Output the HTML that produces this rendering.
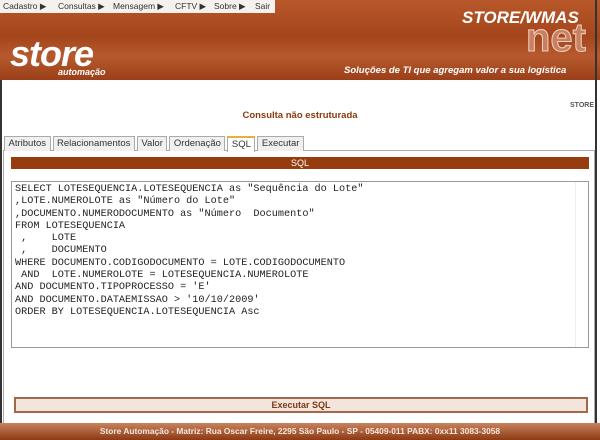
<!DOCTYPE html>
<html><head><meta charset="utf-8"><style>
*{margin:0;padding:0;box-sizing:border-box}
body{width:600px;height:440px;overflow:hidden;background:#fff;font-family:"Liberation Sans",sans-serif;position:relative}
.hdr{position:absolute;left:0;top:0;width:600px;height:80px;background:linear-gradient(180deg,#b8582a 0%,#a4451c 45%,#b65a2e 70%,#9a3f18 100%)}
.menu{position:absolute;left:0;top:0;width:275px;height:13px;background:#f4f1ee;font-size:8.5px;color:#333;line-height:13px;white-space:nowrap}
.menu span{position:absolute;top:0}
.logo{position:absolute;left:10px;top:33px;font:italic bold 36px "Liberation Sans",sans-serif;color:#fff;letter-spacing:-1px}
.auto{position:absolute;left:58px;top:67px;font:italic bold 9px "Liberation Sans",sans-serif;color:#fff}
.wmas{position:absolute;left:462px;top:8px;font:italic bold 17px "Liberation Sans",sans-serif;color:#fff}
.net{position:absolute;left:526px;top:16px;font:bold 40px "Liberation Sans",sans-serif;color:#c98060;-webkit-text-stroke:1px #f0d0c0}
.slog{position:absolute;left:344px;top:65px;font:italic bold 9.5px "Liberation Sans",sans-serif;color:#fff}
.lb{position:absolute;left:0;top:80px;width:2px;height:343px;background:#333}
.rb{position:absolute;right:3px;top:0;width:2px;height:423px;background:#333}
.store{position:absolute;right:6px;top:102px;font-size:7px;font-weight:bold;color:#555}
.title{position:absolute;left:0;width:600px;top:110px;text-align:center;font-size:9.5px;font-weight:bold;color:#8a3b10}
.tabs{position:absolute;left:4px;top:136px;height:15px;display:flex;font-size:9.5px;color:#333}
.tabs div{border:1px solid #aaa;border-bottom:none;background:#f0f0f0;padding:1px 3.5px;margin-right:2px;height:15px}
.tabs .act{background:#fff;border-top:2px solid #e8b040;height:16px}
.panel{position:absolute;left:3px;top:150px;width:592px;height:280px;border:1px solid #aaa}
.sqlbar{position:absolute;left:11px;top:157px;width:578px;height:12px;background:#963c0f;color:#fff;font-size:9px;text-align:center;line-height:12px}
.ta{position:absolute;left:11px;top:181px;width:578px;height:167px;border:1px solid #999;background:#fff}
.ta pre{position:absolute;left:3px;top:2px;font:10.2px/12.3px "Liberation Mono",monospace;color:#222}
.sb{position:absolute;right:0;top:0;width:13px;height:165px;border-left:1px solid #eee}
.btn{position:absolute;left:14px;top:397px;width:574px;height:16px;border:2px solid #a0694c;background:#f3e5dc;text-align:center;font-size:9px;font-weight:bold;color:#7a3a18;line-height:12px}
.foot{position:absolute;left:0;top:423px;width:600px;height:17px;background:linear-gradient(180deg,#c7835e,#8c3a14);color:#f5e6dc;font-size:8.4px;font-weight:bold;text-align:center;line-height:17px}
</style></head><body>
<div class="hdr">
<div class="menu"><span style="left:3px">Cadastro ▶</span><span style="left:58px">Consultas ▶</span><span style="left:113px">Mensagem ▶</span><span style="left:175px">CFTV ▶</span><span style="left:214px">Sobre ▶</span><span style="left:255px">Sair</span></div>
<div class="logo">store</div><div class="auto">automação</div>
<div class="wmas">STORE/WMAS</div><div class="net">net</div>
<div class="slog">Soluções de TI que agregam valor a sua logística</div>
</div>
<div class="lb"></div><div class="rb"></div>
<div class="store">STORE</div>
<div class="title">Consulta não estruturada</div>
<div class="panel"></div>
<div class="tabs"><div>Atributos</div><div>Relacionamentos</div><div>Valor</div><div>Ordenação</div><div class="act">SQL</div><div>Executar</div></div>
<div class="sqlbar">SQL</div>
<div class="ta"><pre>SELECT LOTESEQUENCIA.LOTESEQUENCIA as "Sequência do Lote"
,LOTE.NUMEROLOTE as "Número do Lote"
,DOCUMENTO.NUMERODOCUMENTO as "Número  Documento"
FROM LOTESEQUENCIA
 ,    LOTE
 ,    DOCUMENTO
WHERE DOCUMENTO.CODIGODOCUMENTO = LOTE.CODIGODOCUMENTO
 AND  LOTE.NUMEROLOTE = LOTESEQUENCIA.NUMEROLOTE
AND DOCUMENTO.TIPOPROCESSO = 'E'
AND DOCUMENTO.DATAEMISSAO &gt; '10/10/2009'
ORDER BY LOTESEQUENCIA.LOTESEQUENCIA Asc</pre><div class="sb"></div></div>
<div class="btn">Executar SQL</div>
<div class="foot">Store Automação - Matriz: Rua Oscar Freire, 2295 São Paulo - SP - 05409-011 PABX: 0xx11 3083-3058</div>
</body></html>
